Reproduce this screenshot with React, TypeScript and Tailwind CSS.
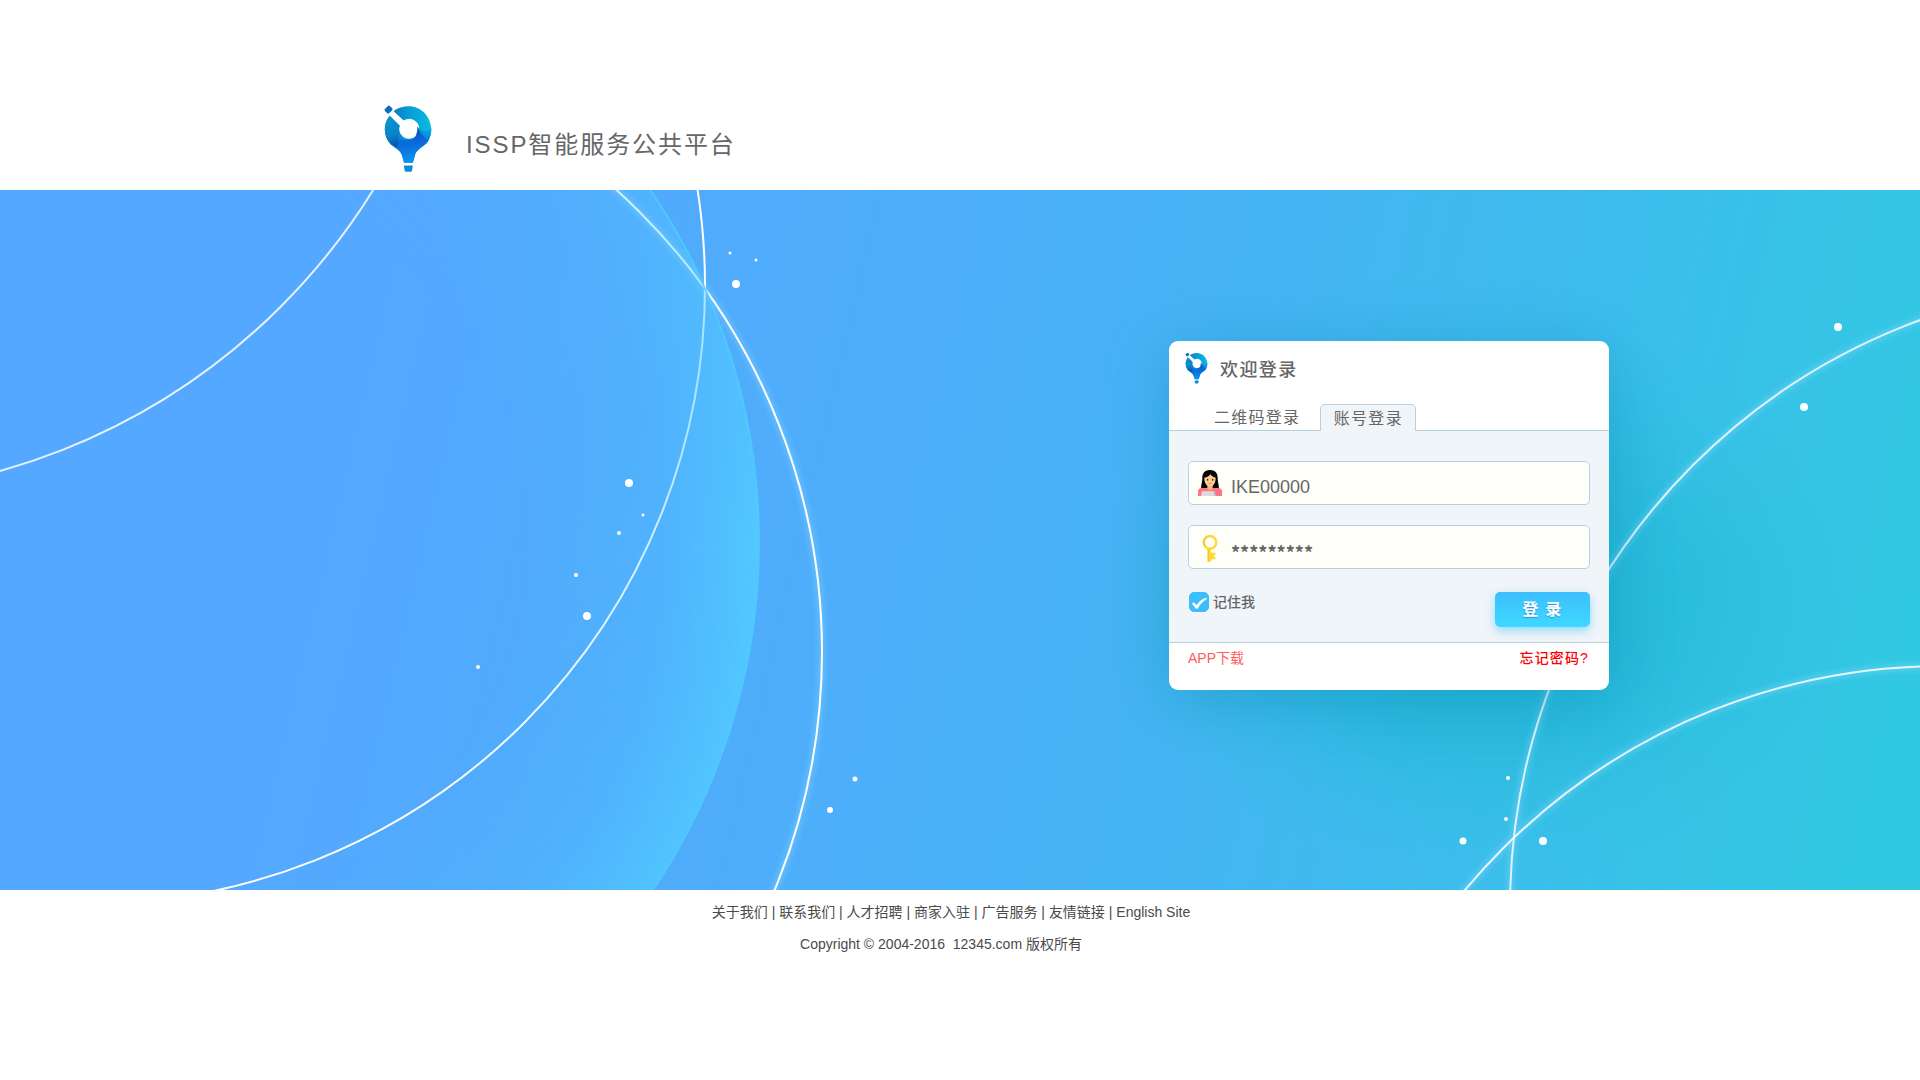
import { useState } from "react";

const DOTS: [number, number, number][] = [
  [730, 63, 1.5], [756, 70, 1.5], [736, 94, 4], [629, 293, 4], [643, 325, 1.5],
  [619, 343, 2], [576, 385, 2], [587, 426, 4], [478, 477, 2], [855, 589, 2.5],
  [830, 620, 3], [1838, 137, 4], [1804, 217, 4], [1508, 588, 2], [1506, 629, 2],
  [1463, 651, 3.5], [1543, 651, 4],
];

function Logo({ id, className }: { id: string; className: string }) {
  return (
    <svg viewBox="28 27 144 206" className={className} aria-hidden="true">
      <defs>
        <linearGradient id={`${id}-ring`} x1="0" y1="0.3" x2="1" y2="0.3">
          <stop offset="0" stopColor="#0a62ae" />
          <stop offset="0.4" stopColor="#0893d2" />
          <stop offset="1" stopColor="#06bee2" />
        </linearGradient>
        <linearGradient id={`${id}-body`} x1="0" y1="0" x2="0.15" y2="1">
          <stop offset="0" stopColor="#0a4fa8" />
          <stop offset="0.45" stopColor="#0c62d8" />
          <stop offset="1" stopColor="#0793ee" />
        </linearGradient>
        <linearGradient id={`${id}-left`} x1="0.4" y1="0" x2="0.6" y2="1">
          <stop offset="0" stopColor="#0a95cf" />
          <stop offset="0.6" stopColor="#0786cb" />
          <stop offset="1" stopColor="#0750a6" />
        </linearGradient>
        <linearGradient id={`${id}-right`} x1="0.8" y1="0" x2="0.3" y2="1">
          <stop offset="0" stopColor="#07aee2" />
          <stop offset="1" stopColor="#0a79dc" />
        </linearGradient>
      </defs>
      <path d="M62 44C90 27 130 29 153 57C174 83 175 119 156 145C147 154 128 162 122 176L116 198Q115 203 111 203H91Q87 203 87 198L81 178C75 164 60 158 48 148C27 127 24 89 45 62L75 92A30 30 0 1 0 87 76L57 48Z" fill={`url(#${id}-ring)`} />
      <path d="M45 62L75 92C67 113 66 136 76 156C60 157 42 141 36 126C25 102 31 79 45 62Z" fill={`url(#${id}-left)`} />
      <path d="M128 94C137 111 152 128 163 132C156 150 128 160 122 176L116 198Q115 203 111 203H91Q87 203 87 198L81 178C76 166 69 161 60 155C91 162 130 139 128 94Z" fill={`url(#${id}-body)`} />
      <path d="M128 94C134 111 151 132 162 135C167 124 171 113 170 97C158 112 144 113 128 94Z" fill={`url(#${id}-right)`} />
      <path d="M70 132C84 135 109 138 122 124C113 146 88 161 63 156C72 152 73 142 70 132Z" fill="#0a6cd6" />
      <rect x="31" y="34" width="21" height="18" rx="5" transform="rotate(-45 42 43)" fill="#0870b8" />
      <path d="M90 211H113Q115 211 114 214L112 227Q111 230 108 230H94Q91 230 90 227L88 214Q88 211 90 211Z" fill="#078ce2" />
    </svg>
  );
}

function Scene() {
  return (
    <svg
      viewBox="0 0 1920 700"
      preserveAspectRatio="xMidYMid slice"
      className="absolute inset-0 h-full w-full"
      aria-hidden="true"
    >
      <defs>
        <linearGradient id="sky" gradientUnits="userSpaceOnUse" x1="350" y1="200" x2="1880" y2="560">
          <stop offset="0" stopColor="#55a8ff" />
          <stop offset="0.35" stopColor="#4daefa" />
          <stop offset="0.65" stopColor="#41b8f0" />
          <stop offset="1" stopColor="#31c8e2" />
        </linearGradient>
        <linearGradient id="orb-fade" x1="0" y1="0" x2="0" y2="1">
          <stop offset="0.2" stopColor="#ffffff" stopOpacity="0.25" />
          <stop offset="0.5" stopColor="#ffffff" />
          <stop offset="0.8" stopColor="#ffffff" stopOpacity="0.8" />
        </linearGradient>
        <mask id="orb-mask" maskUnits="userSpaceOnUse" x="-500" y="-280" width="1270" height="1260">
          <rect x="-500" y="-280" width="1270" height="1260" fill="url(#orb-fade)" />
        </mask>
        <radialGradient id="orb" gradientUnits="userSpaceOnUse" cx="136" cy="352" r="623">
          <stop offset="0.62" stopColor="#50c8ff" stopOpacity="0" />
          <stop offset="0.84" stopColor="#50c4ff" stopOpacity="0.3" />
          <stop offset="1" stopColor="#52caff" stopOpacity="0.95" />
        </radialGradient>
        <radialGradient id="teal" gradientUnits="userSpaceOnUse" cx="0" cy="0" r="1" gradientTransform="translate(1490 410) scale(380 280)">
          <stop offset="0" stopColor="#18b4cc" stopOpacity="0.85" />
          <stop offset="0.5" stopColor="#1eb9d4" stopOpacity="0.55" />
          <stop offset="1" stopColor="#2cc0dc" stopOpacity="0" />
        </radialGradient>
        <filter id="glow" x="-10%" y="-10%" width="120%" height="120%">
          <feGaussianBlur stdDeviation="3" />
        </filter>
      </defs>
      <rect width="1920" height="700" fill="url(#sky)" />
      <rect width="1920" height="700" fill="url(#teal)" />
      <g fill="none" stroke="#8fdcff" strokeWidth="5" opacity="0.5" filter="url(#glow)">
        <circle cx="200" cy="462" r="622" />
        <circle cx="2135" cy="717" r="625" />
        <circle cx="1943" cy="1098" r="622" />
      </g>
      <g fill="none" stroke="#ffffff" strokeWidth="2">
        <circle cx="-174" cy="-338" r="643" opacity="0.85" />
        <circle cx="87" cy="96" r="618" />
        <circle cx="200" cy="462" r="622" />
        <circle cx="2135" cy="717" r="625" opacity="0.8" />
        <circle cx="1943" cy="1098" r="622" opacity="0.85" />
      </g>
      <circle cx="136" cy="352" r="623" fill="url(#orb)" mask="url(#orb-mask)" />
      <circle cx="136" cy="352" r="623" fill="none" stroke="#50ccff" strokeWidth="2" opacity="0.8" />
      <g fill="#ffffff">
        {DOTS.map(([x, y, r]) => (
          <circle key={`${x}-${y}`} cx={x} cy={y} r={r} />
        ))}
      </g>
    </svg>
  );
}

function UserIcon() {
  return (
    <svg viewBox="0 0 72 78" className="h-[26px] w-6 shrink-0" aria-hidden="true">
      <path d="M36 0C18 0 13 12 13 24C13 36 9 46 9 56H63C63 46 59 36 59 24C59 12 54 0 36 0Z" fill="#050505" />
      <path d="M0 78V64C0 57 5 54 12 54H60C67 54 72 57 72 64V78Z" fill="#ff7482" />
      <path d="M28 44H44V54C44 62 28 62 28 54Z" fill="#f5b878" />
      <path d="M19 23C28 22 33 18 37 13C41 18 47 22 53 23C53 38 47 49 36 49C25 49 19 38 19 23Z" fill="#ffcb8c" />
      <ellipse cx="29" cy="29" rx="2" ry="3" fill="#151515" />
      <ellipse cx="44" cy="29" rx="2" ry="3" fill="#151515" />
      <path d="M31 40Q36 43 41 40" stroke="#e46b62" strokeWidth="2" fill="none" />
      <path d="M12 64H50L53 78H9Z" fill="#dcdcdc" />
      <path d="M46 64H50L53 78H49Z" fill="#b9b9b9" />
    </svg>
  );
}

function KeyIcon() {
  return (
    <svg viewBox="-12 0 72 81" className="h-[27px] w-6 shrink-0" aria-hidden="true">
      <path d="M17 40H27V53H40V60H36V66H40V73H28V80H17Z" fill="#ffd92f" />
      <path d="M17 40H20V80H17Z" fill="#edbd25" />
      <circle cx="24" cy="22" r="19" fill="none" stroke="#ffd92f" strokeWidth="7" />
      <path d="M14 6A19 19 0 0 0 10 35" fill="none" stroke="#e9bb28" strokeWidth="3" />
    </svg>
  );
}

function LoginCard() {
  const [account, setAccount] = useState("IKE00000");
  const [secret, setSecret] = useState("*********");
  const [remember, setRemember] = useState(true);

  return (
    <form
      className="w-[440px] overflow-hidden rounded-[9px] bg-white text-[#666666]"
      onSubmit={(e) => e.preventDefault()}
    >
      <div className="flex h-[43px] items-start gap-3 px-4 pt-[11px]">
        <Logo id="small" className="h-8 w-[23px]" />
        <h2 className="pt-1 text-lg leading-7 font-medium tracking-[0.08em]">欢迎登录</h2>
      </div>
      <div role="tablist" className="mt-5 flex items-end border-b border-[#b9d0e0] pl-[33px] text-base leading-6">
        <button type="button" role="tab" aria-selected="false" className="px-3 pt-[2px] tracking-[0.08em]">二维码登录</button>
        <button type="button" role="tab" aria-selected="true" className="-mb-px ml-2 h-[27px] w-24 rounded-t-[5px] border border-b-0 border-[#b9d0e0] bg-[#f0f5f9] pt-[2px] tracking-[0.08em]">
          账号登录
        </button>
      </div>
      <div className="border-b border-[#b9d0e0] bg-[#f0f5f9] px-[19px] pt-[30px] pb-[15px]">
        <label className="flex h-11 items-start gap-[9px] rounded-[5px] border border-[#b9d0e0] bg-[#fefff9] pl-[9px] pt-2">
          <UserIcon />
          <input
            aria-label="账号"
            value={account}
            onChange={(e) => setAccount(e.target.value)}
            className="min-w-0 flex-1 bg-transparent pt-[5px] text-lg leading-6 outline-none"
          />
        </label>
        <label className="mt-5 flex h-11 items-start gap-[9px] rounded-[5px] border border-[#b9d0e0] bg-[#fefff9] pl-[9px] pt-[9px]">
          <KeyIcon />
          <input
            aria-label="密码"
            value={secret}
            onChange={(e) => setSecret(e.target.value)}
            className="min-w-0 flex-1 bg-transparent pt-[5px] font-['Noto_Sans_CJK_SC',sans-serif] text-lg leading-6 font-bold outline-none"
          />
        </label>
        <div className="mt-[23px] flex items-start justify-between">
          <label className="flex items-center gap-1 pl-px text-sm leading-5 font-medium">
            <span className="relative flex h-5 w-5">
              <input
                type="checkbox"
                checked={remember}
                onChange={(e) => setRemember(e.target.checked)}
                className="peer h-5 w-5 appearance-none rounded-[5px] border border-[#3cbdfc] bg-white checked:bg-[#3cbdfc]"
              />
              <svg viewBox="0 0 60 60" className="pointer-events-none absolute inset-0 hidden peer-checked:block" aria-hidden="true">
                <path d="M9 35L14 31L23 39C30 28 39 20 52 17L54 21C41 29 33 37 26 50H21Z" fill="#ffffff" />
              </svg>
            </span>
            记住我
          </label>
          <button
            type="submit"
            className="h-[35px] w-[95px] rounded-[5px] bg-linear-to-b from-[#3dbefd] to-[#3ed9ff] text-base leading-6 font-bold tracking-[0.08em] text-white shadow-[0_4px_10px_rgba(61,190,253,0.5)] text-shadow-[0_1px_1px_rgba(20,110,190,0.6)]"
          >
            登 录
          </button>
        </div>
      </div>
      <div className="flex items-start justify-between pt-[5px] pr-5 pb-[22px] pl-[19px] text-sm leading-5">
        <a href="#app" className="text-[#ff5b5b]">APP下载</a>
        <a href="#forgot" className="font-medium tracking-[0.08em] text-[#ff0000]">忘记密码?</a>
      </div>
    </form>
  );
}

const LINKS = ["关于我们", "联系我们", "人才招聘", "商家入驻", "广告服务", "友情链接", "English Site"];

export default function App() {
  return (
    <div className="flex min-h-screen flex-col bg-white font-['Liberation_Sans','Noto_Sans_CJK_SC',sans-serif]">
      <header className="flex items-start gap-[34px] pt-[104px] pb-[17px] pl-[20%]">
        <Logo id="main" className="h-[69px] w-12" />
        <h1 className="pt-[23px] text-2xl leading-9 tracking-[0.08em] text-[#666666]">ISSP智能服务公共平台</h1>
      </header>
      <main className="relative flex justify-end overflow-hidden bg-[#4caefa] pt-[151px] pr-[16.2%] pb-[200px]">
        <Scene />
        <div className="relative rounded-[9px] shadow-[0_10px_60px_rgba(10,130,175,0.4)]">
          <LoginCard />
        </div>
      </main>
      <footer className="flex flex-col items-center gap-3 pt-3 text-sm leading-5 text-[#4a4a4a]">
        <nav className="flex pr-[18px]" aria-label="页脚">
          {LINKS.map((label, i) => (
            <span key={label} className="whitespace-pre">
              {i > 0 && " | "}
              <a href="#site">{label}</a>
            </span>
          ))}
        </nav>
        <p className="pr-[38px] whitespace-pre">Copyright © 2004-2016  12345.com 版权所有</p>
      </footer>
    </div>
  );
}
